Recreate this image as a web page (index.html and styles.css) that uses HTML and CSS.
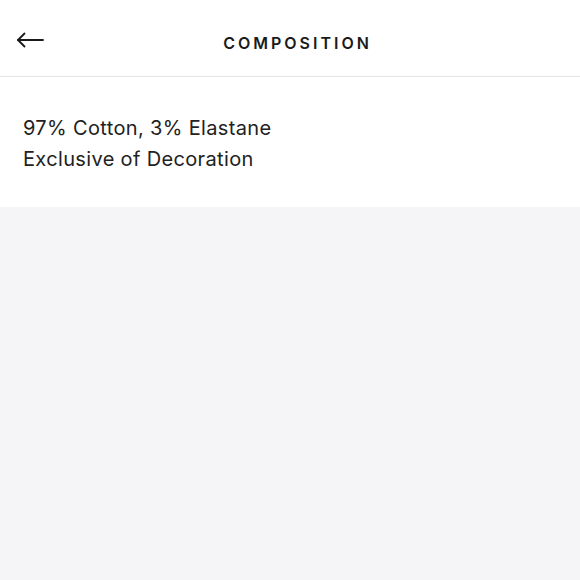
FILE: index.html
```html
<!DOCTYPE html>
<html lang="en">
<head>
  <meta charset="UTF-8"/>
  <meta name="viewport" content="width=device-width, initial-scale=1.0"/>
  <title>Composition</title>
  <link rel="stylesheet" href="styles.css">
</head>
<body>
  <header class="topbar">
    <a class="back" href="#" aria-label="Back">
      <svg width="28" height="16" viewBox="0 0 28 16" fill="none" stroke="#1a1a1a" stroke-width="1.8" stroke-linecap="round" stroke-linejoin="round">
        <path d="M27 8H2"/>
        <path d="M8.5 1.5L2 8l6.5 6.5"/>
      </svg>
    </a>
    <h1>COMPOSITION</h1>
  </header>
  <section class="details">
    <p>97% Cotton, 3% Elastane</p>
    <p>Exclusive of Decoration</p>
  </section>
</body>
</html>
```

FILE: styles.css
```css
* { box-sizing: border-box; margin:0; padding:0; }
html, body { height:100%; }
body { font-family: Inter, "Liberation Sans", sans-serif; background:#f5f5f7; color:#222; }
.topbar { position:relative; height:77px; background:#fff; border-bottom:1px solid #e6e6e6; display:flex; align-items:center; justify-content:center; }
.back { position:absolute; left:16px; top:32px; display:block; line-height:0; }
.topbar h1 { font-size:16px; font-weight:600; letter-spacing:3px; margin-top:9px; margin-left:15px; color:#1a1a1a; }
.details { background:#fff; padding:36px 23px 34px; height:130px; }
.details p { font-size:20px; line-height:31px; font-weight:400; letter-spacing:0.35px; }
```
